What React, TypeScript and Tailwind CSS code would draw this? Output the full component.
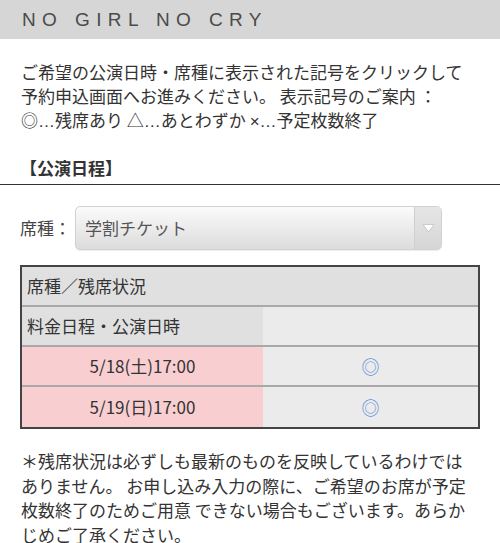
const jp = "font-['Noto_Sans_CJK_JP','Noto_Sans_JP',sans-serif]";
const latin = "font-['Liberation_Sans',sans-serif]";
const dots = `${latin} leading-none`;

function SelectBox() {
  return (
    <div className="flex h-[44px] w-[367px] overflow-hidden rounded-[5px] border border-[#d2d2d2] bg-gradient-to-b from-[#fbfbfb] to-[#dcdcdc] shadow-[0_1px_1px_rgba(0,0,0,0.08)]">
      <div className="flex flex-1 items-center pl-[9px] text-[17px] text-[#555]">学割チケット</div>
      <div className="flex w-[27px] items-center justify-center border-l border-[#cfcfcf] bg-gradient-to-b from-[#e6e6e6] to-[#d6d6d6]">
        <svg width="13" height="10" viewBox="0 0 13 10">
          <path d="M1 1.5h11L6.5 9z" fill="#fff" stroke="#c2c2c2" strokeWidth="0.8" />
        </svg>
      </div>
    </div>
  );
}

function Row({ left, right, leftBg, last }: { left: React.ReactNode; right: React.ReactNode; leftBg: string; last?: boolean }) {
  return (
    <div className={`flex h-[40px] ${last ? "" : "border-b-2 border-[#a9a9a9]"}`}>
      <div className={`flex w-[241px] items-center ${leftBg}`}>{left}</div>
      <div className="flex flex-1 items-center justify-center bg-[#ebebeb]">{right}</div>
    </div>
  );
}

export default function App() {
  return (
    <div className={`h-[543px] w-[500px] overflow-hidden bg-white text-[#333] ${jp}`}>
      {/* title bar */}
      <div className="flex h-[39px] items-center bg-[#d6d6d6] pl-[22px] pt-[2px]">
        <span className={`${latin} text-[19px] tracking-[6.4px] text-[#4a4a4a]`}>NO GIRL NO CRY</span>
      </div>

      {/* intro */}
      <div className="mt-[21px] px-[21px] text-[17px] leading-[24px] whitespace-nowrap">
        <div className="h-[24px]">ご希望の公演日時・席種に表示された記号をクリックして</div>
        <div className="h-[24px]">予約申込画面へお進みください。 表示記号のご案内 ：</div>
        <div className="h-[24px]">
          ◎<span className={dots}>…</span>残席あり △<span className={dots}>…</span>あとわずか <span className={dots}>×…</span>予定枚数終了
        </div>
      </div>

      <div className="mt-[24px] border-b-[1.5px] border-[#333] px-[20px] pb-[4px] text-[17px] leading-[24px] font-bold">【公演日程】</div>

      {/* seat type select */}
      <div className="mt-[21px] flex items-center pl-[20px]">
        <span className="w-[55px] text-[17px] text-[#444]">席種：</span>
        <SelectBox />
      </div>

      {/* schedule table */}
      <div className="mx-[20px] mt-[15px] border-2 border-[#444]">
        <div className="flex h-[40px] items-center border-b-2 border-[#a9a9a9] bg-[#e0e0e0] pl-[5px] text-[17px]">席種／残席状況</div>
        <Row leftBg="bg-[#e0e0e0] pl-[5px] text-[17px]" left="料金日程・公演日時" right={null} />
        <Row
          leftBg="bg-[#f8ced0] justify-center text-[17px]"
          left="5/18(土)17:00"
          right={<span className="text-[18px] text-[#5f8fd8]">◎</span>}
        />
        <Row
          leftBg="bg-[#f8ced0] justify-center text-[17px]"
          left="5/19(日)17:00"
          right={<span className="text-[18px] text-[#5f8fd8]">◎</span>}
          last
        />
      </div>

      {/* note */}
      <p className="mt-[20px] px-[21px] text-[17px] leading-[24.6px] whitespace-nowrap">
        ＊残席状況は必ずしも最新のものを反映しているわけでは
        <br />
        ありません。 お申し込み入力の際に、ご希望のお席が予定
        <br />
        枚数終了のためご用意 できない場合もございます。あらか
        <br />
        じめご了承ください。
      </p>
    </div>
  );
}
